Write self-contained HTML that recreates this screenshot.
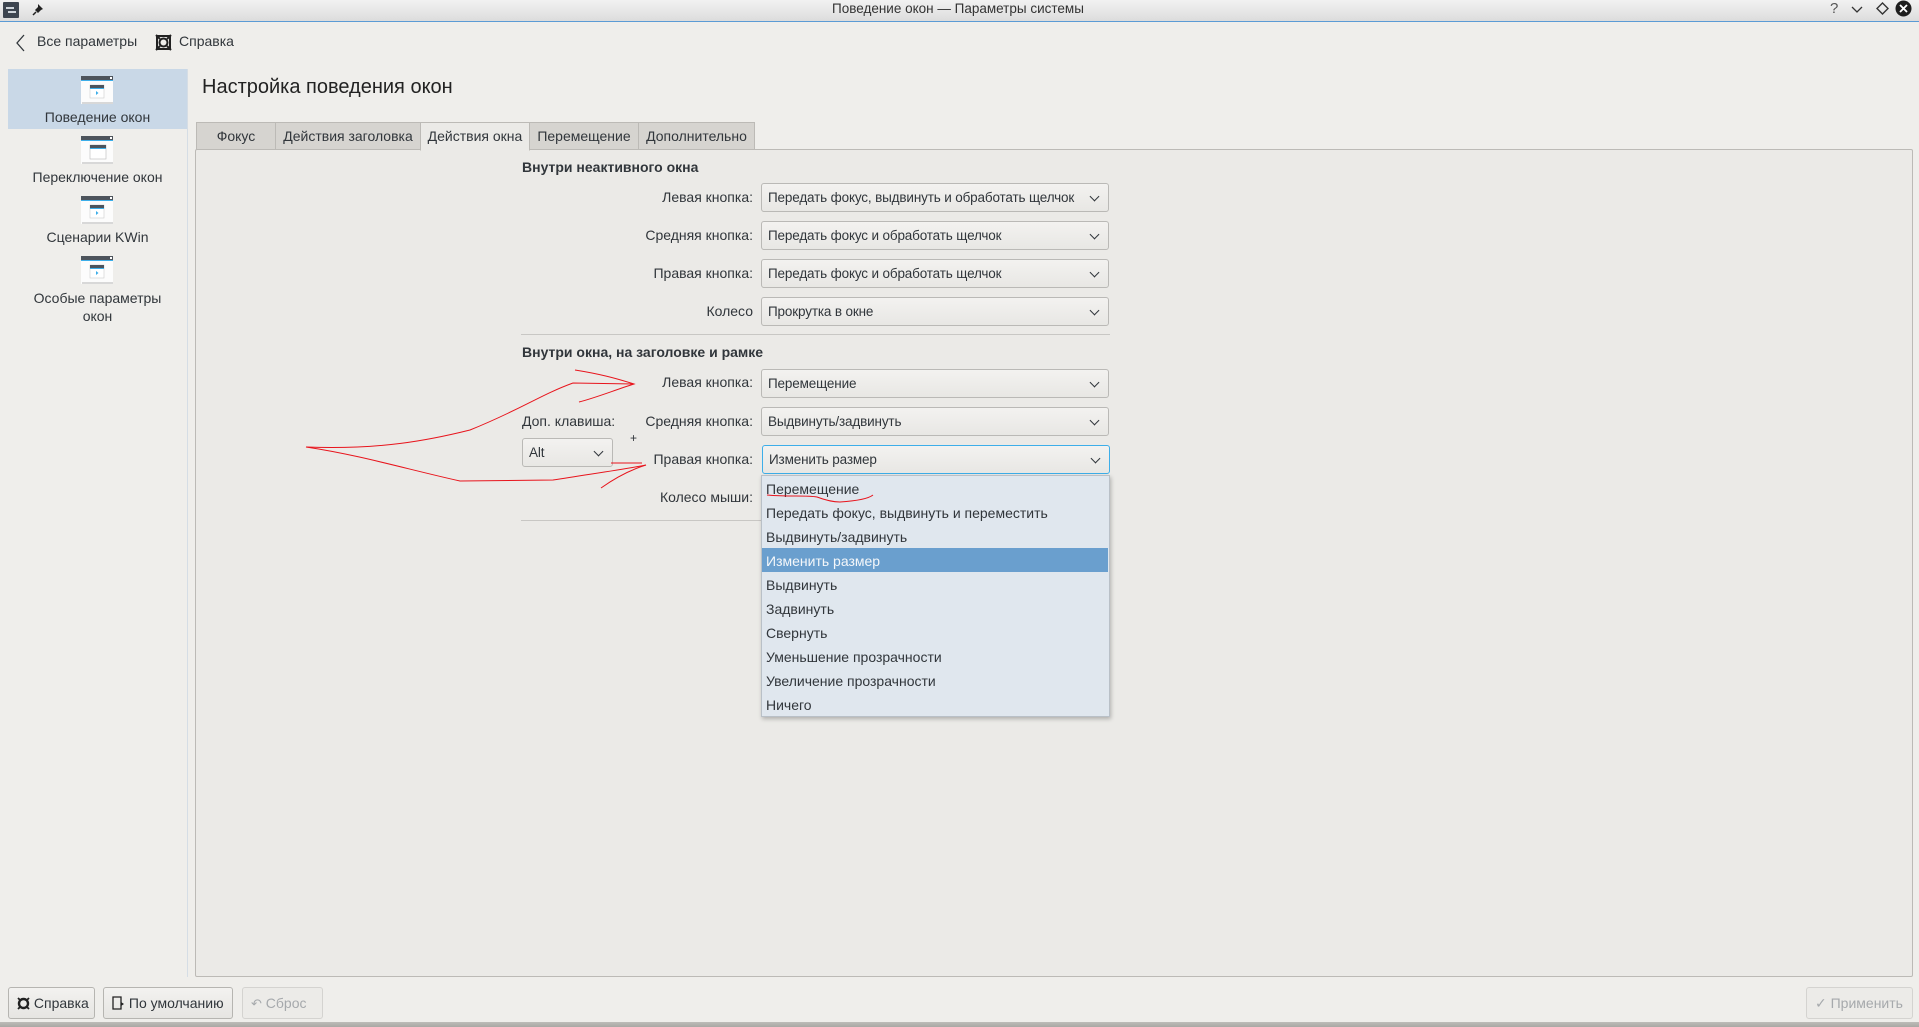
<!DOCTYPE html>
<html><head><meta charset="utf-8"><style>
*{box-sizing:border-box;margin:0;padding:0}
body{width:1919px;height:1027px;background:#efeeeb;font-family:"Liberation Sans","DejaVu Sans",sans-serif;font-size:14px;color:#31363b;position:relative;overflow:hidden}
.a{position:absolute;white-space:nowrap}
.tb{left:0;top:0;width:1919px;height:22px;background:linear-gradient(#f2f2f2,#dcdcdc);border-bottom:1px solid #5b9bd5}
.cb{position:absolute;height:29px;border:1px solid #bab9b6;border-radius:3px;background:linear-gradient(#f3f2f0,#e8e7e4);padding-left:6px;line-height:27px;font-size:13.5px;letter-spacing:-0.15px;color:#31363b}
.cb:after{content:"";position:absolute;right:10px;top:9px;width:6px;height:6px;border-right:1.3px solid #31363b;border-bottom:1.3px solid #31363b;transform:rotate(45deg)}
.lbl{text-align:right;width:240px;left:513px;font-size:14px}
.tab{position:absolute;top:122px;height:28px;background:#d6d4d0;border:1px solid #bcbab6;line-height:26px;text-align:center;font-size:14px}
.it{position:absolute;left:766px;font-size:14px;line-height:24px;height:24px}
.btn{position:absolute;top:987px;height:32px;border:1px solid #b6b5b1;border-radius:3px;background:linear-gradient(#f3f2f0,#e6e5e2);line-height:30px;font-size:14px;padding-left:8px}
.ic{position:absolute;width:32px;height:28px;left:81px}
</style></head><body>
<div class="a tb"></div>
<div class="a" style="left:3px;top:2px;width:16px;height:16px;background:#3d4550;border-radius:1px"></div>
<div class="a" style="left:6px;top:7px;width:8px;height:2px;background:#cfd5db"></div>
<div class="a" style="left:8px;top:11px;width:8px;height:2px;background:#cfd5db"></div>
<svg class="a" style="left:32px;top:3px" width="12" height="13"><path d="M6 1 L11 6 L9 7 L7 9 L6 10 L3 7 L4 6 L6 4Z" fill="#222"/><path d="M4 9 L1 12" stroke="#222" stroke-width="1.5"/></svg>
<div class="a" style="left:832px;top:0;font-size:13.5px;line-height:17px;color:#333">Поведение окон — Параметры системы</div>
<div class="a" style="left:1830px;top:0;font-size:15px;color:#555">?</div>
<svg class="a" style="left:1851px;top:4px" width="12" height="10"><path d="M1 3 L6 8 L11 3" fill="none" stroke="#333" stroke-width="1.3"/></svg>
<svg class="a" style="left:1876px;top:2px" width="13" height="13"><path d="M6.5 1 L12 6.5 L6.5 12 L1 6.5Z" fill="none" stroke="#333" stroke-width="1.4"/></svg>
<svg class="a" style="left:1895px;top:0" width="17" height="17"><circle cx="8.5" cy="8.5" r="8" fill="#1e1e1e"/><path d="M5 5 L12 12 M12 5 L5 12" stroke="#fff" stroke-width="1.8"/></svg>

<svg class="a" style="left:15px;top:34px" width="12" height="18"><path d="M9 1 L2 9 L9 17" fill="none" stroke="#31363b" stroke-width="1.3"/></svg>
<div class="a" style="left:37px;top:33px">Все параметры</div>
<svg class="a" style="left:155px;top:34px" width="17" height="17"><rect x="2" y="2" width="13" height="13" fill="none" stroke="#222" stroke-width="2"/><circle cx="8.5" cy="8.5" r="4" fill="none" stroke="#222" stroke-width="2"/><path d="M1 1l4 4M16 1l-4 4M1 16l4-4M16 16l-4-4" stroke="#222" stroke-width="2"/></svg>
<div class="a" style="left:179px;top:33px">Справка</div>

<div class="a" style="left:8px;top:69px;width:179px;height:60px;background:#c9d8e7"></div>
<div class="a" style="left:187px;top:69px;width:1px;height:908px;background:#d5dde5"></div>
<svg class="ic" style="top:76px" viewBox="0 0 32 28"><rect x="0" y="4" width="32" height="24" fill="#fcfcfc"/><rect x="1" y="26" width="31" height="2" fill="#d8d8d8"/><rect x="0" y="0" width="32" height="4" fill="#4d545c"/><rect x="0" y="4" width="32" height="1" fill="#3daee9"/><rect x="29" y="1" width="2" height="2" fill="#fff"/><rect x="9" y="9" width="14" height="13" fill="#fff" stroke="#ccc" stroke-width=".6"/><rect x="9" y="9" width="14" height="3" fill="#4d545c"/><rect x="9" y="12" width="14" height="1" fill="#3daee9"/><path d="M15 15 L17.5 17 L15 19Z" fill="#3daee9"/></svg>
<div class="a" style="left:8px;width:179px;text-align:center;top:109px">Поведение окон</div>
<svg class="ic" style="top:136px" viewBox="0 0 32 28"><rect x="0" y="4" width="32" height="24" fill="#fcfcfc"/><rect x="1" y="26" width="31" height="2" fill="#d8d8d8"/><rect x="0" y="0" width="32" height="4" fill="#4d545c"/><rect x="0" y="4" width="32" height="1" fill="#3daee9"/><rect x="29" y="1" width="2" height="2" fill="#fff"/><rect x="9" y="9" width="16" height="14" fill="#fff" stroke="#bbb" stroke-width=".6"/><rect x="9" y="9" width="16" height="3" fill="#4d545c"/><rect x="9" y="12" width="16" height="1" fill="#3daee9"/></svg>
<div class="a" style="left:8px;width:179px;text-align:center;top:169px">Переключение окон</div>
<svg class="ic" style="top:196px" viewBox="0 0 32 28"><rect x="0" y="4" width="32" height="24" fill="#fcfcfc"/><rect x="1" y="26" width="31" height="2" fill="#d8d8d8"/><rect x="0" y="0" width="32" height="4" fill="#4d545c"/><rect x="0" y="4" width="32" height="1" fill="#3daee9"/><rect x="29" y="1" width="2" height="2" fill="#fff"/><rect x="9" y="9" width="14" height="13" fill="#fff" stroke="#ccc" stroke-width=".6"/><rect x="9" y="9" width="14" height="3" fill="#4d545c"/><rect x="9" y="12" width="14" height="1" fill="#3daee9"/><path d="M15 15 L17.5 17 L15 19Z" fill="#3daee9"/></svg>
<div class="a" style="left:8px;width:179px;text-align:center;top:229px">Сценарии KWin</div>
<svg class="ic" style="top:256px" viewBox="0 0 32 28"><rect x="0" y="4" width="32" height="24" fill="#fcfcfc"/><rect x="1" y="26" width="31" height="2" fill="#d8d8d8"/><rect x="0" y="0" width="32" height="4" fill="#4d545c"/><rect x="0" y="4" width="32" height="1" fill="#3daee9"/><rect x="29" y="1" width="2" height="2" fill="#fff"/><rect x="9" y="9" width="14" height="13" fill="#fff" stroke="#ccc" stroke-width=".6"/><rect x="9" y="9" width="14" height="3" fill="#4d545c"/><rect x="9" y="12" width="14" height="1" fill="#3daee9"/><path d="M15 15 L17.5 17 L15 19Z" fill="#3daee9"/></svg>
<div class="a" style="left:8px;width:179px;text-align:center;top:289px;line-height:18px;white-space:normal">Особые параметры<br>окон</div>

<div class="a" style="left:202px;top:76px;font-size:20px;color:#222">Настройка поведения окон</div>

<div class="a" style="left:195px;top:149px;width:1718px;height:828px;border:1px solid #bcbab6;border-radius:2px;background:#ebeae7"></div>
<div class="tab" style="left:196px;width:80px">Фокус</div>
<div class="tab" style="left:275px;width:146px">Действия заголовка</div>
<div class="tab" style="left:420px;width:110px;background:#ebeae7;border-bottom-color:#ebeae7;height:29px">Действия окна</div>
<div class="tab" style="left:529px;width:110px">Перемещение</div>
<div class="tab" style="left:638px;width:117px">Дополнительно</div>

<div class="a" style="left:522px;top:159px;font-weight:bold;font-size:14px">Внутри неактивного окна</div>
<div class="a lbl" style="top:189px">Левая кнопка:</div>
<div class="cb" style="left:761px;top:183px;width:348px">Передать фокус, выдвинуть и обработать щелчок</div>
<div class="a lbl" style="top:227px">Средняя кнопка:</div>
<div class="cb" style="left:761px;top:221px;width:348px">Передать фокус и обработать щелчок</div>
<div class="a lbl" style="top:265px">Правая кнопка:</div>
<div class="cb" style="left:761px;top:259px;width:348px">Передать фокус и обработать щелчок</div>
<div class="a lbl" style="top:303px">Колесо</div>
<div class="cb" style="left:761px;top:297px;width:348px">Прокрутка в окне</div>
<div class="a" style="left:521px;top:334px;width:589px;height:1px;background:#c8c7c4"></div>

<div class="a" style="left:522px;top:344px;font-weight:bold;font-size:14px">Внутри окна, на заголовке и рамке</div>
<div class="a lbl" style="top:374px">Левая кнопка:</div>
<div class="cb" style="left:761px;top:369px;width:348px">Перемещение</div>
<div class="a" style="left:522px;top:413px">Доп. клавиша:</div>
<div class="a lbl" style="top:413px">Средняя кнопка:</div>
<div class="cb" style="left:761px;top:407px;width:348px">Выдвинуть/задвинуть</div>
<div class="cb" style="left:522px;top:438px;width:91px">Alt</div>
<div class="a" style="left:630px;top:431px;font-size:12px">+</div>
<div class="a lbl" style="top:451px">Правая кнопка:</div>
<div class="cb" style="left:762px;top:445px;width:348px;border-color:#3daee9">Изменить размер</div>
<div class="a lbl" style="top:489px">Колесо мыши:</div>
<div class="a" style="left:521px;top:520px;width:589px;height:1px;background:#c8c7c4"></div>

<div class="a" style="left:761px;top:475px;width:349px;height:242px;background:#e0e7ee;border:1px solid #b9c0c7;box-shadow:1px 2px 4px rgba(0,0,0,.25)"></div>
<div class="a" style="left:762px;top:548px;width:346px;height:24px;background:#6a9fce"></div>
<div class="it" style="top:477px">Перемещение</div>
<div class="it" style="top:501px">Передать фокус, выдвинуть и переместить</div>
<div class="it" style="top:525px">Выдвинуть/задвинуть</div>
<div class="it" style="top:549px;color:#f4f7fa">Изменить размер</div>
<div class="it" style="top:573px">Выдвинуть</div>
<div class="it" style="top:597px">Задвинуть</div>
<div class="it" style="top:621px">Свернуть</div>
<div class="it" style="top:645px">Уменьшение прозрачности</div>
<div class="it" style="top:669px">Увеличение прозрачности</div>
<div class="it" style="top:693px">Ничего</div>

<svg class="a" style="left:0;top:0" width="1919" height="1027"><g fill="none" stroke="#e8141c" stroke-width="1"><path d="M306 447 C380 450,430 440,470 430 C520 410,540 395,573 383 L634 384"/><path d="M575 370 C600 374,615 378,634 384 C615 390,595 398,579 402"/><path d="M306 447 C360 455,410 470,460 481 L553 480 C590 474,620 470,646 465"/><path d="M611 463 L642 463 M601 488 C615 478,630 470,646 465"/><path d="M767 495 C790 497,805 495,817 497 C825 500,832 502,840 502 C855 501,868 499,873 495"/></g></svg>

<div class="btn" style="left:8px;width:87px"><svg width="13" height="13" style="vertical-align:-2px"><circle cx="6.5" cy="6.5" r="4.5" fill="none" stroke="#222" stroke-width="2.4"/><path d="M1 1l3 3M12 1l-3 3M1 12l3-3M12 12l-3-3" stroke="#222" stroke-width="1.8"/></svg> Справка</div>
<div class="btn" style="left:103px;width:130px"><svg width="13" height="14" style="vertical-align:-2px"><path d="M1 1 H9 V13 H1Z" fill="none" stroke="#222" stroke-width="1.3"/><path d="M9 6 L12 8 L9 10" fill="#222"/></svg> По умолчанию</div>
<div class="btn" style="left:242px;width:81px;color:#a6a9ac;background:#ecebe8;border-color:#d4d3d0"><span style="font-size:13px">↶</span> Сброс</div>
<div class="btn" style="left:1806px;width:107px;color:#a6a9ac;background:#ecebe8;border-color:#d4d3d0">✓ Применить</div>
<div class="a" style="left:0;top:1022px;width:1919px;height:5px;background:linear-gradient(#bdbcb8,#a9a8a4)"></div>
</body></html>
